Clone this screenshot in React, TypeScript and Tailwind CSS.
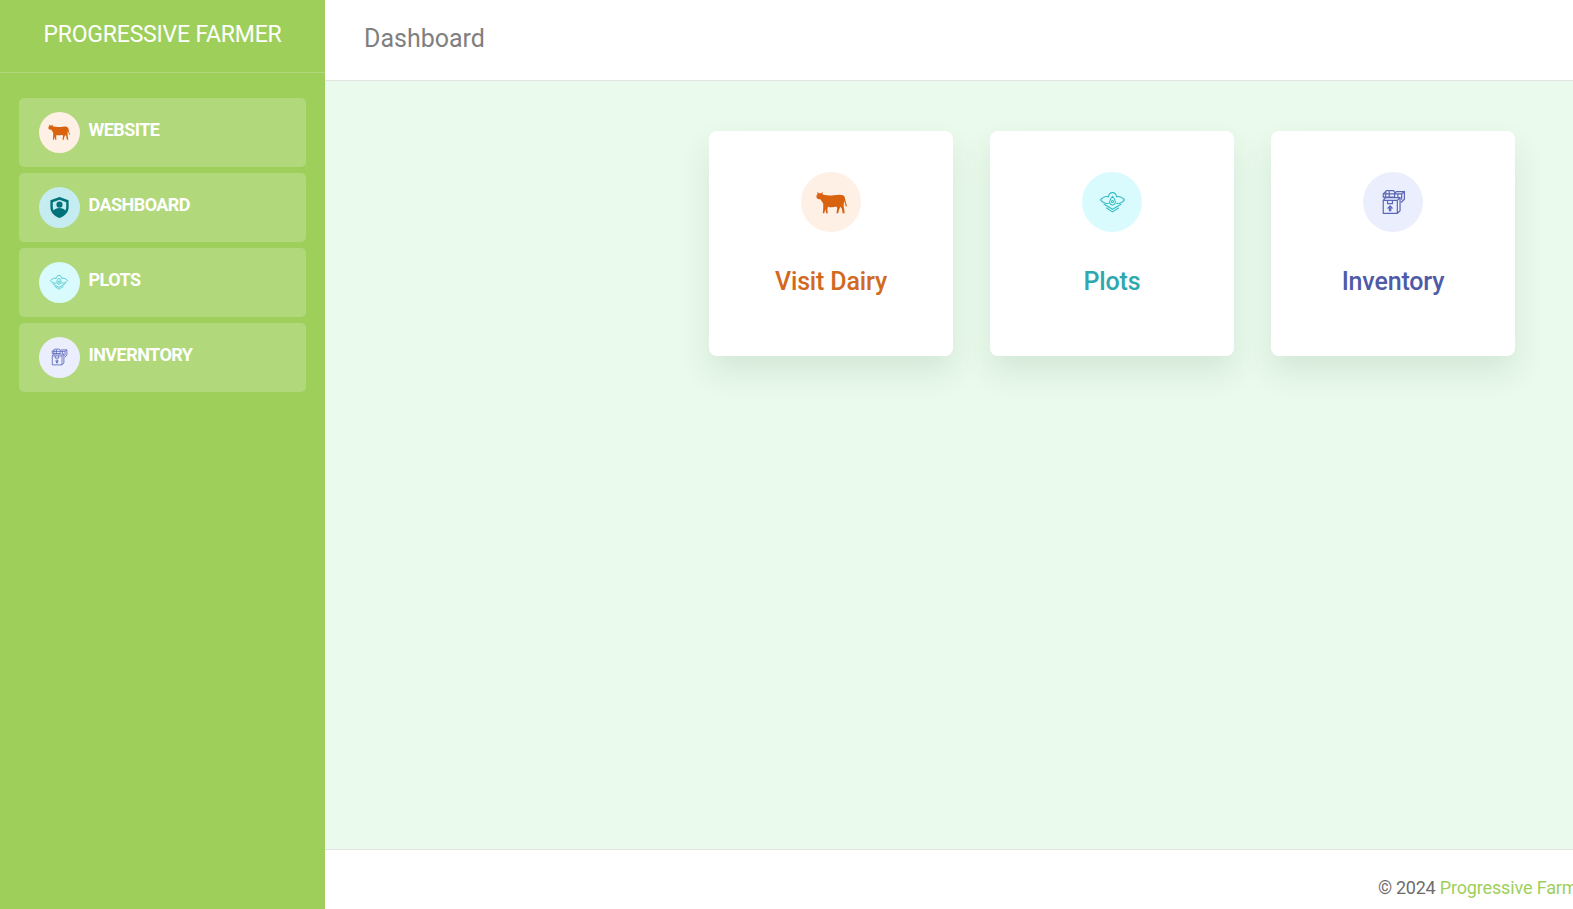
import React from 'react';

const Cow = ({ className }: { className: string }) => (
  <svg viewBox="0 0 30 22" className={className} fill="currentColor">
    <path d="M.5 4 1.500 3 1.200.8 3 2h2L6.500.5l-.3 2.300 1.300.7C10 4 14 4.500 17 4c3-.5 7-1 9 0 1.500.6 2 2 2.300 4 .3 2 1 4 1.700 6.500l-1 .5c-.7-2-1.200-4-1.800-5.500-.2 2.500-.7 4.500-.2 6.500l.8 5.500h-2L25 17l-1.500-2-1.500 4-.5 2.500h-1.700l.7-5-.5-1.500c-3 .5-6.500.8-8.500 0l-.5 3 .5 3.500H9.800L9 17.500l-1 4H6.600L7 16v-4C5.800 10 5 9 4.500 8 3 8 1 7.500.5 6.500z" />
  </svg>
);

const Shield = ({ className }: { className: string }) => (
  <svg viewBox="0 0 24 24" className={className} fill="currentColor">
    <path fillRule="evenodd" d="M12 1l9.500 3.500v7c0 5.500-3.800 9.500-9.500 11.500-5.700-2-9.500-6-9.500-11.500v-7zM12 4 5 6.600v4.900c0 1.300.3 2.500.8 3.600C7 13.500 9.200 12.500 12 12.500s5 1 6.200 2.600c.5-1.100.8-2.300.8-3.600V6.600z" />
    <circle cx="12" cy="9" r="3.200" />
  </svg>
);

const Drone = ({ className }: { className: string }) => (
  <svg viewBox="0 0 24 20" className={className} fill="none" stroke="currentColor" strokeWidth="1">
    <path d="M8 5c.3-2.600 2-4.500 4-4.500S15.700 2.400 16 5" />
    <path d="M8.500 4.500C5.500 3.800 2.500 5 .5 7.500c2 2.500 5 3.800 8 3.300M15.500 4.500c3-.7 6 .5 8 3-2 2.500-5 3.800-8 3.300" />
    <path d="M12 4c1.800 2 2.800 3.800 2.800 5.500a2.800 2.800 0 0 1-5.600 0C9.200 7.800 10.200 6 12 4z" />
    <circle cx="12" cy="9" r="1" />
    <path d="M3.500 11.500 12 16.500l8.500-5M6 15l6 4 6-4" />
  </svg>
);

const Boxes = ({ className }: { className: string }) => (
  <svg viewBox="0 0 24 24" className={className} fill="none" stroke="currentColor" strokeWidth="1.100">
    <path d="M3 4.500 6 1.500h6.500l1 1.500v4.500H3z" />
    <path d="M3 4.500h10M5.500 2.500 5 7.500M8.500 2v5.500" />
    <path d="M13.500 4.500h6.500l2.500-2v7l-3 3M13.500 4.500l1.500-2h7.500M20 4.500v5.500M16.500 4.500v3" />
    <path d="M3 10.500 5 8h13.500v12L16 22.500H3zM3 10.500h13v12M16 10.500 18.500 8" />
    <path d="M7 10.500v3h4.500v-3M9.300 15.500l-1.800 2h1.200V20h1.200v-2.500h1.200z" />
  </svg>
);

const navItems = [
  { label: 'WEBSITE', circle: 'bg-[#fff0e6]', color: 'text-[#d9620f]', Icon: Cow, size: 'w-[22px] h-[16px]' },
  { label: 'DASHBOARD', circle: 'bg-[#c5ecf0]', color: 'text-[#00737a]', Icon: Shield, size: 'w-[23px] h-[23px]' },
  { label: 'PLOTS', circle: 'bg-[#d9fbfd]', color: 'text-[#36bdc4]', Icon: Drone, size: 'w-[18px] h-[15px]' },
  { label: 'INVERNTORY', circle: 'bg-[#ebeffd]', color: 'text-[#5a66b8]', Icon: Boxes, size: 'w-[18px] h-[18px]' },
];

const cards = [
  { label: 'Visit Dairy', circle: 'bg-[#fff0e6]', color: 'text-[#d2691e]', iconColor: 'text-[#d9620f]', Icon: Cow, size: 'w-[31px] h-[23px]' },
  { label: 'Plots', circle: 'bg-[#d9fbfd]', color: 'text-[#2ea8b0]', iconColor: 'text-[#36bdc4]', Icon: Drone, size: 'w-[25px] h-[21px]' },
  { label: 'Inventory', circle: 'bg-[#ebeffd]', color: 'text-[#4f5aa8]', iconColor: 'text-[#5a66b8]', Icon: Boxes, size: 'w-[26px] h-[26px]' },
];

export default function App() {
  return (
    <div className="flex w-[1573px] h-[909px] overflow-hidden bg-white font-['Roboto',sans-serif]">
      {/* Sidebar */}
      <aside className="w-[325px] shrink-0 bg-[#9ecf5b]">
        <div className="h-[73px] border-b border-white/20 pt-[18px] text-center text-[23px] leading-[34px] tracking-[-0.2px] text-white">
          PROGRESSIVE FARMER
        </div>
        <nav className="flex flex-col gap-[6px] pt-[25px] pl-[19px] pr-[19px]">
          {navItems.map(({ label, circle, color, Icon, size }) => (
            <div key={label} className="flex h-[69px] gap-[9px] rounded-[5px] bg-white/20 pl-[19.5px] pt-[13.5px]">
              <div className={`flex h-[41px] w-[41px] items-center justify-center rounded-full ${circle} ${color}`}>
                <Icon className={size} />
              </div>
              <span className="mt-[8.5px] text-[18px] leading-[20px] font-bold tracking-[-0.55px] text-white">{label}</span>
            </div>
          ))}
        </nav>
      </aside>

      {/* Main */}
      <main className="flex min-w-0 flex-1 flex-col">
        <header className="h-[81px] shrink-0 border-b border-[#e3e3e3] bg-white pl-[39px] pt-[23px] text-[25px] leading-[32px] text-[#7f7f7f]">
          Dashboard
        </header>
        <section className="flex flex-1 items-start justify-end gap-[37px] bg-[#eafaec] pt-[50px] pr-[58px]">
          {cards.map(({ label, circle, color, iconColor, Icon, size }) => (
            <div key={label} className="flex h-[225px] w-[244px] flex-col items-center rounded-[8px] bg-white pt-[41px] shadow-[0_16px_30px_rgba(60,110,70,0.12)]">
              <div className={`flex h-[60px] w-[60px] items-center justify-center rounded-full ${circle} ${iconColor}`}>
                <Icon className={size} />
              </div>
              <h3 className={`mt-[32px] text-[25px] leading-[36px] font-medium tracking-[-0.15px] ${color}`}>{label}</h3>
            </div>
          ))}
        </section>
        <footer className="h-[60px] shrink-0 border-t border-[#e3e3e3] bg-white pl-[1053px] pt-[26px] text-[18px] leading-[24px] whitespace-nowrap text-[#6c6c6c]">
          <span className="tracking-[-0.3px]">© 2024</span> <span className="tracking-[-0.15px] text-[#9ecf5b]">Progressive Farmer</span>
        </footer>
      </main>
    </div>
  );
}
